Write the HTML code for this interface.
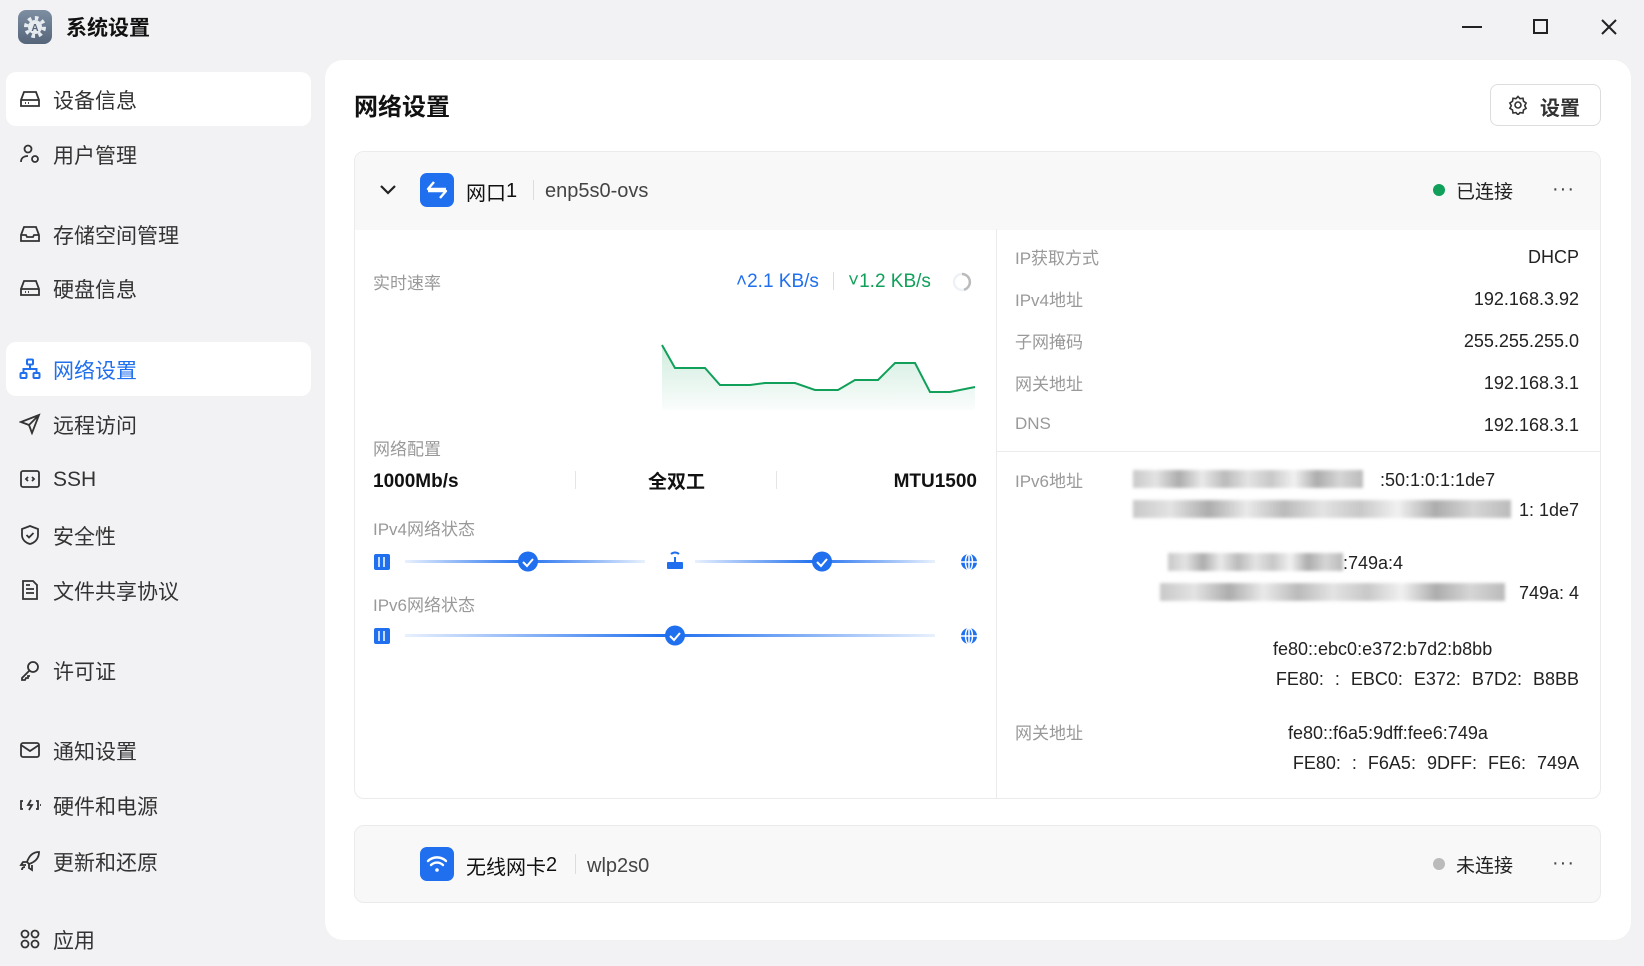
<!DOCTYPE html>
<html><head><meta charset="utf-8"><style>
*{margin:0;padding:0;box-sizing:border-box}
body{width:1644px;height:959px;background:#f2f2f4;font-family:"Liberation Sans","Noto Sans CJK SC",sans-serif;color:#222;position:relative;overflow:hidden}
.a{position:absolute;white-space:nowrap}
.nav{position:absolute;left:6px;width:305px;height:54px;border-radius:10px}
.nav .ic{position:absolute;left:13px;top:16px;width:22px;height:22px}
.nav span{position:absolute;left:47px;top:13px;font-size:21px;color:#333}
.lbl{color:#999;font-size:17px}
.val{font-size:18px;color:#222;text-align:right}
.blur{position:absolute;height:18px;background:linear-gradient(90deg,#bbb,#ddd 10%,#999 20%,#e5e5e5 30%,#aaa 40%,#ddd 50%,#bbb 60%,#eee 70%,#999 80%,#ccc 90%,#aaa);filter:blur(1.5px);opacity:.8}
</style></head><body>
<!-- title bar -->
<div class="a" style="left:18px;top:10px;width:34px;height:34px;border-radius:8px;background:linear-gradient(#7d8ea3,#566579)">
<svg width="34" height="34" viewBox="0 0 34 34"><circle cx="17" cy="17" r="9" fill="none" stroke="#e6ebf0" stroke-width="4" stroke-dasharray="3.5 3.5"/><circle cx="17" cy="17" r="7" fill="#e6ebf0"/><text x="17" y="21" font-size="10" text-anchor="middle" fill="#566579" font-family="Liberation Sans" font-weight="bold">A</text></svg></div>
<div class="a" style="left:66px;top:12px;font-size:21px;font-weight:bold;color:#111">系统设置</div>
<div class="a" style="left:1462px;top:26px;width:20px;height:2px;background:#222"></div>
<div class="a" style="left:1533px;top:19px;width:15px;height:15px;border:2px solid #222"></div>
<svg class="a" style="left:1600px;top:18px" width="18" height="18"><path d="M2 2L16 16M16 2L2 16" stroke="#222" stroke-width="2"/></svg>

<!-- sidebar -->
<div class="nav" style="top:72px;background:#fff"><svg class="ic" viewBox="0 0 22 22" fill="none" stroke="#333" stroke-width="1.8"><path d="M2 12l3-8h12l3 8v6H2z M2 12h18"/><path d="M6 15h1M9 15h1" /></svg><span>设备信息</span></div>
<div class="nav" style="top:127px"><svg class="ic" viewBox="0 0 22 22" fill="none" stroke="#333" stroke-width="1.8"><circle cx="9" cy="6" r="3.5"/><path d="M2 19c0-4 3-6 7-6"/><circle cx="16" cy="16" r="3"/></svg><span>用户管理</span></div>
<div class="nav" style="top:207px"><svg class="ic" viewBox="0 0 22 22" fill="none" stroke="#333" stroke-width="1.8"><path d="M2 12l3-8h12l3 8v6H2z M2 12h5l1 2h6l1-2h5"/></svg><span>存储空间管理</span></div>
<div class="nav" style="top:261px"><svg class="ic" viewBox="0 0 22 22" fill="none" stroke="#333" stroke-width="1.8"><path d="M2 12l3-8h12l3 8v6H2z M2 12h18"/><path d="M6 15h1M9 15h1"/></svg><span>硬盘信息</span></div>
<div class="nav" style="top:342px;background:#fff"><svg class="ic" viewBox="0 0 22 22" fill="none" stroke="#1f6fef" stroke-width="2"><rect x="8" y="1.5" width="6" height="5" rx="1"/><rect x="1.5" y="15" width="6" height="5" rx="1"/><rect x="14.5" y="15" width="6" height="5" rx="1"/><path d="M11 7v4M4.5 15v-4h13v4"/></svg><span style="color:#1f6fef">网络设置</span></div>
<div class="nav" style="top:397px"><svg class="ic" viewBox="0 0 22 22" fill="none" stroke="#333" stroke-width="1.8"><path d="M2 9L20 2L13 20L10 12Z M10 12L20 2"/></svg><span>远程访问</span></div>
<div class="nav" style="top:452px"><svg class="ic" viewBox="0 0 22 22" fill="none" stroke="#333" stroke-width="1.8"><rect x="2" y="3" width="18" height="16" rx="2"/><path d="M9 9l-2 2 2 2M13 9l2 2-2 2"/></svg><span style="top:16px">SSH</span></div>
<div class="nav" style="top:508px"><svg class="ic" viewBox="0 0 22 22" fill="none" stroke="#333" stroke-width="1.8"><path d="M11 2l8 3v6c0 5-4 8-8 9-4-1-8-4-8-9V5z"/><path d="M7.5 11l2.5 2.5 4.5-4.5"/></svg><span>安全性</span></div>
<div class="nav" style="top:563px"><svg class="ic" viewBox="0 0 22 22" fill="none" stroke="#333" stroke-width="1.8"><path d="M4 2h10l4 4v14H4z M7 10h8M7 14h8M7 6h4"/></svg><span>文件共享协议</span></div>
<div class="nav" style="top:643px"><svg class="ic" viewBox="0 0 22 22" fill="none" stroke="#333" stroke-width="1.8"><circle cx="14" cy="8" r="5"/><path d="M10 12l-7 7v2h3l1-2h2v-2h2"/></svg><span>许可证</span></div>
<div class="nav" style="top:723px"><svg class="ic" viewBox="0 0 22 22" fill="none" stroke="#333" stroke-width="1.8"><rect x="2" y="4" width="18" height="14" rx="2"/><path d="M2 6l9 6 9-6"/></svg><span>通知设置</span></div>
<div class="nav" style="top:778px"><svg class="ic" viewBox="0 0 22 22" fill="none" stroke="#333" stroke-width="1.8"><path d="M4 7H2v8h2M17 7h2v8h-2M12 6l-3 5h4l-3 5"/><path d="M21 11h1"/></svg><span>硬件和电源</span></div>
<div class="nav" style="top:834px"><svg class="ic" viewBox="0 0 22 22" fill="none" stroke="#333" stroke-width="1.8"><path d="M20 2c-6 0-10 4-12 10l2 2c6-2 10-6 10-12z M8 12H4l-2 3h5M10 14v4l3 2v-5M3 20c0-2 1-3 3-3"/></svg><span>更新和还原</span></div>
<div class="nav" style="top:912px"><svg class="ic" viewBox="0 0 22 22" fill="none" stroke="#333" stroke-width="1.8"><circle cx="6" cy="6" r="3.5"/><circle cx="16" cy="6" r="3.5"/><circle cx="6" cy="16" r="3.5"/><circle cx="16" cy="16" r="3.5"/></svg><span>应用</span></div>

<!-- main -->
<div class="a" style="left:325px;top:60px;width:1306px;height:880px;background:#fff;border-radius:18px"></div>
<div class="a" style="left:354px;top:87px;font-size:24px;font-weight:bold;color:#111">网络设置</div>
<div class="a" style="left:1490px;top:84px;width:111px;height:42px;border:1px solid #ddd;border-radius:8px"></div>
<svg class="a" style="left:1508px;top:95px" width="20" height="20" viewBox="0 0 20 20" fill="none" stroke="#333" stroke-width="1.6"><path d="M10 1.5l2 2.2 3-.4.5 3 2.6 1.7-1.4 2.7 1.4 2.6-2.6 1.7-.5 3-3-.4-2 2.2-2-2.2-3 .4-.5-3L1.9 13.3l1.4-2.6-1.4-2.7L4.5 6.3l.5-3 3 .4z"/><circle cx="10" cy="10" r="3"/></svg>
<div class="a" style="left:1540px;top:92px;font-size:20px;font-weight:bold;color:#333">设置</div>

<!-- card 1 -->
<div class="a" style="left:354px;top:151px;width:1247px;height:648px;border:1px solid #ebebeb;border-radius:10px;overflow:hidden">
<div style="height:78px;background:#f8f8f9"></div></div>
<svg class="a" style="left:378px;top:183px" width="20" height="14"><path d="M3 3l7 7 7-7" fill="none" stroke="#222" stroke-width="2.2"/></svg>
<div class="a" style="left:420px;top:173px;width:34px;height:34px;border-radius:7px;background:#1f6fef">
<svg width="34" height="34" viewBox="0 0 34 34" fill="none" stroke="#fff" stroke-width="2.4" stroke-linejoin="round"><path d="M14 9l-6 7h18M20 25l6-7H8"/></svg></div>
<div class="a" style="left:466px;top:177px;font-size:20px;color:#111">网口<span style="position:relative;top:-3px">1</span></div>
<div class="a" style="left:533px;top:180px;width:1px;height:20px;background:#ddd"></div>
<div class="a" style="left:545px;top:180px;font-size:20px;color:#444">enp5s0-ovs</div>
<div class="a" style="left:1433px;top:184px;width:12px;height:12px;border-radius:50%;background:#10a05a"></div>
<div class="a" style="left:1456px;top:177px;font-size:19px;color:#222">已连接</div>
<div class="a" style="left:1552px;top:178px;font-size:20px;color:#444;letter-spacing:1px">···</div>

<div class="a" style="left:996px;top:229px;width:1px;height:570px;background:#ebebeb"></div>

<!-- left column -->
<div class="a lbl" style="left:373px;top:269px">实时速率</div>
<div class="a" style="left:736px;top:271px;font-size:19px;color:#1f6fef">˄2.1 KB/s</div>
<div class="a" style="left:833px;top:272px;width:1px;height:18px;background:#ddd"></div>
<div class="a" style="left:848px;top:271px;font-size:19px;color:#10a05a">˅1.2 KB/s</div>
<svg class="a" style="left:951px;top:271px" width="22" height="22"><circle cx="11" cy="11" r="8" fill="none" stroke="#eef2f6" stroke-width="2.5"/><path d="M11 3a8 8 0 0 1 2 15.7" fill="none" stroke="#bbb" stroke-width="2.5"/></svg>
<svg class="a" style="left:660px;top:335px" width="320" height="75" viewBox="0 0 320 75">
<defs><linearGradient id="g" x1="0" y1="0" x2="0" y2="1"><stop offset="0" stop-color="#10a05a" stop-opacity=".2"/><stop offset="1" stop-color="#10a05a" stop-opacity=".02"/></linearGradient></defs>
<path d="M2 10L15 33H45L60 50H90L105 48H135L155 55H178L195 45H218L235 28H255L270 57H290L315 52V75H2Z" fill="url(#g)"/>
<path d="M2 10L15 33H45L60 50H90L105 48H135L155 55H178L195 45H218L235 28H255L270 57H290L315 52" fill="none" stroke="#10a05a" stroke-width="2"/></svg>

<div class="a lbl" style="left:373px;top:435px">网络配置</div>
<div class="a" style="left:373px;top:471px;font-size:19px;font-weight:bold;color:#111">1000Mb/s</div>
<div class="a" style="left:575px;top:471px;width:1px;height:18px;background:#e5e5e5"></div>
<div class="a" style="left:648px;top:467px;font-size:19px;font-weight:bold;color:#111">全双工</div>
<div class="a" style="left:776px;top:471px;width:1px;height:18px;background:#e5e5e5"></div>
<div class="a" style="left:877px;top:471px;width:100px;text-align:right;font-size:19px;font-weight:bold;color:#111">MTU1500</div>

<div class="a lbl" style="left:373px;top:515px">IPv4网络状态</div>
<div class="a lbl" style="left:373px;top:591px">IPv6网络状态</div>
<svg class="a" style="left:370px;top:545px" width="620" height="105" viewBox="0 0 620 105">
<defs><linearGradient id="l" x1="0" x2="1"><stop offset="0" stop-color="#1f6fef" stop-opacity=".1"/><stop offset=".5" stop-color="#1f6fef"/><stop offset="1" stop-color="#1f6fef" stop-opacity=".1"/></linearGradient></defs>
<rect x="35" y="15" width="240" height="3" fill="url(#l)"/>
<rect x="325" y="15" width="240" height="3" fill="url(#l)"/>
<rect x="35" y="89" width="530" height="3" fill="url(#l)"/>
<g fill="#1f6fef"><rect x="4" y="9" width="16" height="16" rx="2"/><rect x="4" y="83" width="16" height="16" rx="2"/></g>
<g stroke="#fff" stroke-width="1.5"><path d="M9 12v10M14 12v10M9 86v10M14 86v10"/></g>
<g><circle cx="158" cy="16.5" r="10" fill="#1f6fef"/><circle cx="452" cy="16.5" r="10" fill="#1f6fef"/><circle cx="305" cy="90.5" r="10" fill="#1f6fef"/></g>
<g fill="none" stroke="#fff" stroke-width="2"><path d="M153 17l4 4 6-7M447 17l4 4 6-7M300 91l4 4 6-7"/></g>
<rect x="297" y="17" width="16" height="7" rx="1" fill="#1f6fef"/><path d="M305 17v-5M301 9a6 6 0 0 1 8 0" stroke="#1f6fef" stroke-width="2" fill="none"/>
<g fill="#1f6fef"><circle cx="599" cy="17" r="8"/><circle cx="599" cy="91" r="8"/></g>
<g stroke="#fff" stroke-width="1.5" fill="none"><path d="M591 17h16M599 9v16M591 91h16M599 83v16"/><ellipse cx="599" cy="17" rx="3.5" ry="8"/><ellipse cx="599" cy="91" rx="3.5" ry="8"/></g>
</svg>

<!-- right column -->
<div class="a lbl" style="left:1015px;top:244px">IP获取方式</div><div class="a val" style="left:1379px;width:200px;top:247px">DHCP</div>
<div class="a lbl" style="left:1015px;top:286px">IPv4地址</div><div class="a val" style="left:1379px;width:200px;top:289px">192.168.3.92</div>
<div class="a lbl" style="left:1015px;top:328px">子网掩码</div><div class="a val" style="left:1379px;width:200px;top:331px">255.255.255.0</div>
<div class="a lbl" style="left:1015px;top:370px">网关地址</div><div class="a val" style="left:1379px;width:200px;top:373px">192.168.3.1</div>
<div class="a lbl" style="left:1015px;top:414px">DNS</div><div class="a val" style="left:1379px;width:200px;top:415px">192.168.3.1</div>
<div class="a" style="left:997px;top:451px;width:603px;height:1px;background:#ebebeb"></div>

<div class="a lbl" style="left:1015px;top:467px">IPv6地址</div>
<div class="blur" style="left:1133px;top:470px;width:230px"></div>
<div class="a val" style="left:1380px;width:106px;top:470px;text-align:left">:50:1:0:1:1de7</div>
<div class="blur" style="left:1133px;top:500px;width:378px"></div>
<div class="a val" style="left:1379px;width:200px;top:500px">1: 1de7</div>
<div class="blur" style="left:1168px;top:553px;width:175px"></div>
<div class="a val" style="left:1343px;width:150px;top:553px;text-align:left">:749a:4</div>
<div class="blur" style="left:1160px;top:583px;width:345px"></div>
<div class="a val" style="left:1379px;width:200px;top:583px">749a: 4</div>
<div class="a val" style="left:1273px;top:639px;text-align:left">fe80::ebc0:e372:b7d2:b8bb</div>
<div class="a val" style="left:1179px;width:400px;top:669px;word-spacing:6px">FE80: : EBC0: E372: B7D2: B8BB</div>
<div class="a lbl" style="left:1015px;top:719px">网关地址</div>
<div class="a val" style="left:1288px;top:723px;text-align:left">fe80::f6a5:9dff:fee6:749a</div>
<div class="a val" style="left:1179px;width:400px;top:753px;word-spacing:6px">FE80: : F6A5: 9DFF: FE6: 749A</div>

<!-- card 2 -->
<div class="a" style="left:354px;top:825px;width:1247px;height:78px;border:1px solid #ebebeb;border-radius:10px;background:#f8f8f9"></div>
<div class="a" style="left:420px;top:847px;width:34px;height:34px;border-radius:7px;background:#1f6fef">
<svg width="34" height="34" viewBox="0 0 34 34" fill="none" stroke="#fff" stroke-width="2.4" stroke-linecap="round"><path d="M8 14a13 13 0 0 1 18 0M11 18a8.5 8.5 0 0 1 12 0"/><circle cx="17" cy="23" r="1.8" fill="#fff" stroke="none"/></svg></div>
<div class="a" style="left:466px;top:851px;font-size:20px;color:#111">无线网卡<span style="position:relative;top:-3px">2</span></div>
<div class="a" style="left:575px;top:854px;width:1px;height:20px;background:#ddd"></div>
<div class="a" style="left:587px;top:855px;font-size:20px;color:#444">wlp2s0</div>
<div class="a" style="left:1433px;top:858px;width:12px;height:12px;border-radius:50%;background:#bbb"></div>
<div class="a" style="left:1456px;top:851px;font-size:19px;color:#222">未连接</div>
<div class="a" style="left:1552px;top:852px;font-size:20px;color:#444;letter-spacing:1px">···</div>
</body></html>
